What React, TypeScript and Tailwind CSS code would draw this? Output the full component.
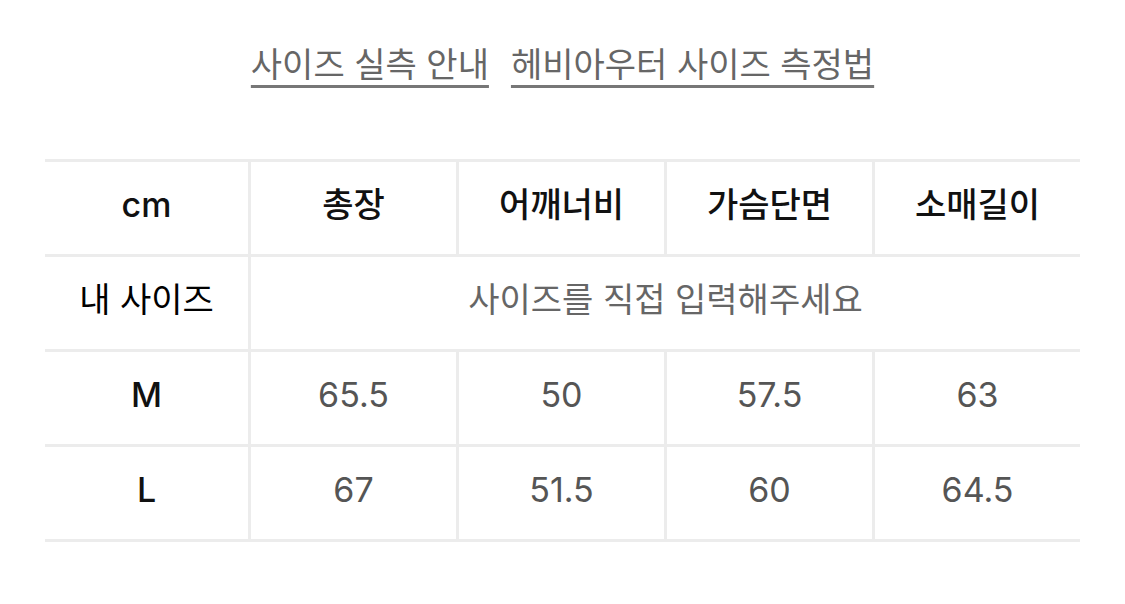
const font = {
  fontFamily: 'Inter, "Noto Sans CJK KR", sans-serif',
};

const columns = ["총장", "어깨너비", "가슴단면", "소매길이"];
const rows = [
  { size: "M", values: ["65.5", "50", "57.5", "63"] },
  { size: "L", values: ["67", "51.5", "60", "64.5"] },
];

function Cell({
  children,
  first,
  last,
  className = "",
}: {
  children: React.ReactNode;
  first?: boolean;
  last?: boolean;
  className?: string;
}) {
  return (
    <div
      className={`flex h-[95px] items-center justify-center border-t-[3px] border-[#ececec] pb-[7px] ${
        first ? "" : "border-l-[3px]"
      } ${last ? "h-[98px] border-b-[3px]" : ""} ${className}`}
    >
      {children}
    </div>
  );
}

export default function App() {
  return (
    <div className="min-h-[604px] w-full bg-white" style={font}>
      {/* Links */}
      <div className="flex justify-center gap-[22px] pt-[42px] text-[34px] leading-[46px] text-[#666]">
        <a className="underline decoration-[#777] decoration-[3px] underline-offset-[8px]">
          사이즈 실측 안내
        </a>
        <a className="underline decoration-[#777] decoration-[3px] underline-offset-[8px]">
          헤비아우터 사이즈 측정법
        </a>
      </div>

      {/* Size table */}
      <div className="mx-auto mt-[71px] grid w-[1035px] grid-cols-[203px_repeat(4,1fr)] text-[34px]">
        <Cell first className="font-medium text-[#111]">
          cm
        </Cell>
        {columns.map((c) => (
          <Cell key={c} className="font-medium text-[#111]">
            {c}
          </Cell>
        ))}

        <Cell first className="text-black">
          내 사이즈
        </Cell>
        <Cell className="col-span-4 text-[#666]">사이즈를 직접 입력해주세요</Cell>

        {rows.map((r, ri) => {
          const last = ri === rows.length - 1;
          return [
            <Cell key={r.size} first last={last} className="font-medium text-[#111]">
              {r.size}
            </Cell>,
            ...r.values.map((v, i) => (
              <Cell key={r.size + i} last={last} className="text-[#555]">
                {v}
              </Cell>
            )),
          ];
        })}
      </div>
    </div>
  );
}
